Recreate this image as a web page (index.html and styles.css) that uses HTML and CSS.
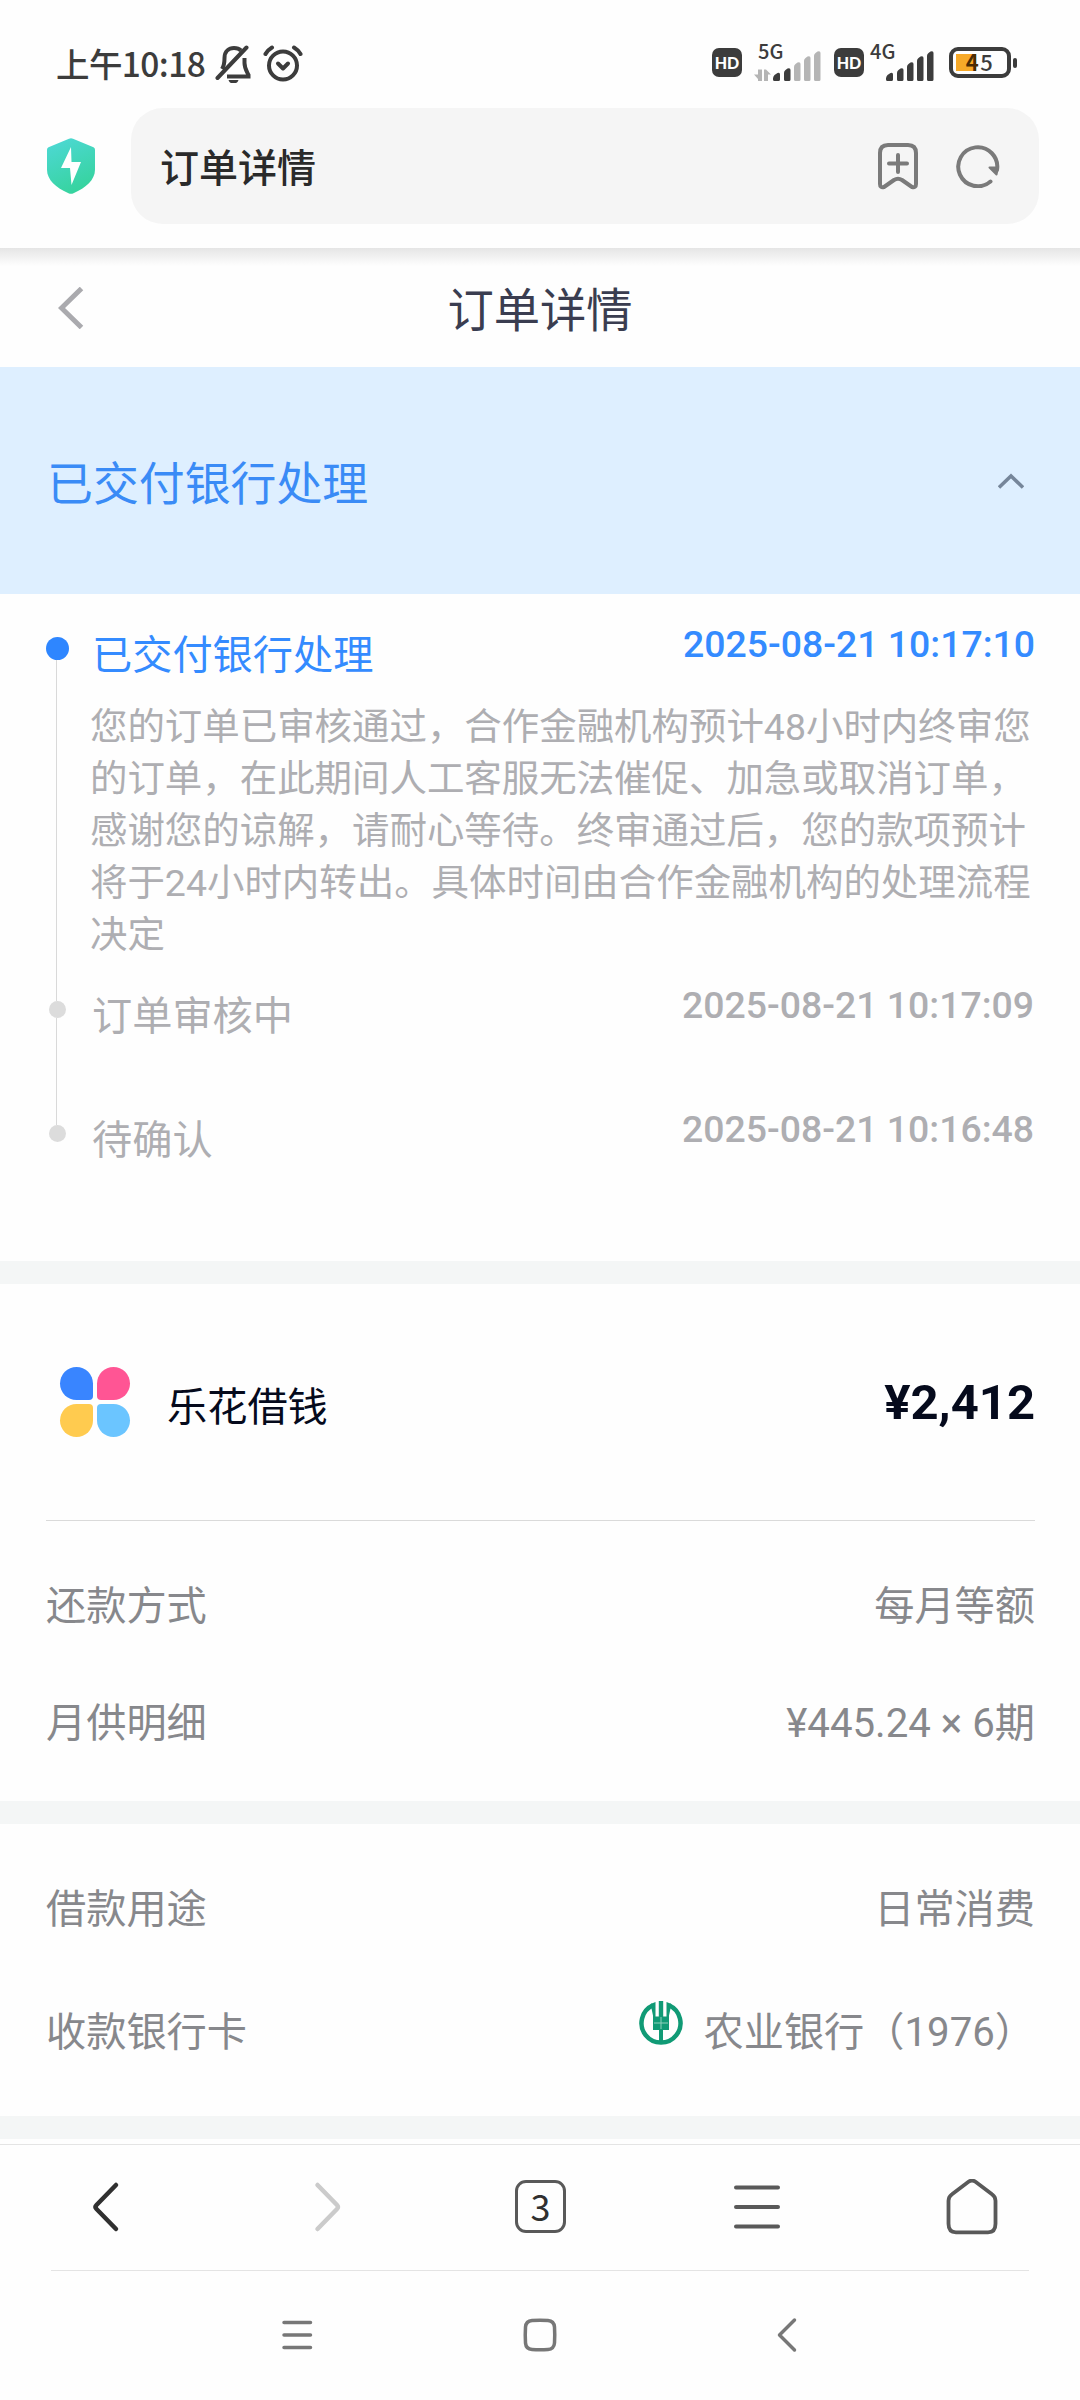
FILE: index.html
```
<!DOCTYPE html>
<html lang="zh-CN">
<head>
  <meta charset="UTF-8">
  <meta name="viewport" content="width=device-width, initial-scale=1.0">
  <title>订单详情</title>
  <link rel="stylesheet" href="styles.css">
</head>
<body>
  <div class="status-bar">
    <span class="clock">上午10:18</span>
    <svg class="icon-bell" width="36" height="40" viewBox="0 0 36 40" fill="none" stroke="#3c3c3c" stroke-width="4">
      <path d="M7 26c2-3 2.500-6 2.500-11C9.500 8 14 5 19 5c3 0 5.500 1 7 2.500"/>
      <path d="M2.500 35L31.500 4.500" stroke-linecap="round"/>
      <path d="M29.500 15v5c0 5 1.500 7 4 12v1.500H12"/>
      <path d="M13.500 37h10c-1 3-3 3.500-5 3.500s-4-.5-5-3.500z" fill="#3c3c3c" stroke="none"/>
    </svg>
    <svg class="icon-alarm" width="40" height="40" viewBox="0 0 40 40" fill="none" stroke="#3c3c3c" stroke-width="4" stroke-linecap="round" stroke-linejoin="round">
      <circle cx="20" cy="22.500" r="14"/>
      <path d="M15 20.500l5 5 5-5"/>
      <path d="M2.500 11c1.500-3 4-5 6.500-6.500M37.500 11C36 8 33.500 6 31 4.500"/>
    </svg>
    <div class="status-right">
      <span class="hd">HD</span>
      <div class="signal signal-5g">
        <span class="net">5G</span>
        <svg width="68" height="40" viewBox="0 0 68 40">
          <path d="M4 27.500h4V39H4v-2L0 32.500h4zM10 27.500h2l5 5h-3V39h-4z" fill="#b5b5b5"/>
          <path d="M19 36.500q0-2 1.500-3.500l3-2q2.500-1 2.500 1.500V37.500q0 1.500-1.500 1.500H20.500Q19 39 19 37.500zM30 31q0-2 1.500-3l2-1.500q3-1 3 1.500v9.500q0 1.500-1.500 1.500h-3.500Q30 39 30 37.500z" fill="#3c3c3c"/>
          <path d="M40 25q0-2 1.500-3l2-1.500q3-1 3 1.500v15.500q0 1.500-1.500 1.500h-3.500Q40 39 40 37.500zM50 19q0-2 1.500-3l2-1.500q3-1 3 1.500v21.500q0 1.500-1.500 1.500h-3.500Q50 39 50 37.500zM60 14q0-2 1.500-3l2-1.500q3-1 3 1.500v26.500q0 1.500-1.500 1.500h-3.500Q60 39 60 37.500z" fill="#b5b5b5"/>
        </svg>
      </div>
      <span class="hd">HD</span>
      <div class="signal signal-4g">
        <span class="net">4G</span>
        <svg width="68" height="40" viewBox="0 0 68 40">
          <path d="M19 36.500q0-2 1.500-3.500l3-2q2.500-1 2.500 1.500V37.500q0 1.500-1.500 1.500H20.500Q19 39 19 37.500zM30 31q0-2 1.500-3l2-1.500q3-1 3 1.500v9.500q0 1.500-1.500 1.500h-3.500Q30 39 30 37.500zM40 25q0-2 1.500-3l2-1.500q3-1 3 1.500v15.500q0 1.500-1.500 1.500h-3.500Q40 39 40 37.500zM50 19q0-2 1.500-3l2-1.500q3-1 3 1.500v21.500q0 1.500-1.500 1.500h-3.500Q50 39 50 37.500zM60 14q0-2 1.500-3l2-1.500q3-1 3 1.500v26.500q0 1.500-1.500 1.500h-3.500Q60 39 60 37.500z" fill="#3c3c3c"/>
        </svg>
      </div>
      <div class="battery"><b>4</b>5</div>
      <div class="battery-tip"></div>
    </div>
  </div>

  <div class="address-bar">
    <svg width="48" height="56" viewBox="0 0 48 56">
      <defs>
        <linearGradient id="shield" x1="0.300" y1="0" x2="0.700" y2="1">
          <stop offset="0" stop-color="#4cd8d2"/>
          <stop offset="1" stop-color="#35d39b"/>
        </linearGradient>
      </defs>
      <path d="M22 .8q2-1 4 0l20.500 8.500q1.500.7 1.500 2.500v20c0 10-9 18-21.500 23.500q-2.500 1-5 0C9 49.800 0 41.800 0 31.800v-20q0-1.800 1.500-2.500z" fill="url(#shield)"/>
      <path d="M24 9L14 30h9l1.500 17L34 24h-9.500z" fill="#fff"/>
    </svg>
    <div class="address">
      <span>订单详情</span>
      <svg class="icon-bookmark" width="42" height="48" viewBox="0 0 42 48" fill="none" stroke="#7a7a7a" stroke-width="4" stroke-linecap="round" stroke-linejoin="round">
        <path d="M3 11q0-8 8-8h20q8 0 8 8v31q0 4-4 3l-10-7q-4-2.500-8 0l-10 7q-4 1-4-3zM21 13v17M12 21.500h18"/>
      </svg>
      <svg width="44" height="44" viewBox="0 0 44 44" fill="none" stroke="#7a7a7a" stroke-width="4" stroke-linecap="round">
        <path d="M34.500 37.500A19.500 19.500 0 1 1 41 26"/>
        <path d="M33.500 23.500h8.500l-1.500 7z" fill="#7a7a7a" stroke-width="2" stroke-linejoin="round"/>
      </svg>
    </div>
  </div>

  <header class="page-header">
    <svg width="26" height="42" viewBox="0 0 26 42" fill="none" stroke="#aaaaae" stroke-width="5">
      <path d="M23.500 1.500L3.500 21l20 19.500"/>
    </svg>
    <h1>订单详情</h1>
  </header>

  <main>
    <div class="banner">
      <h2>已交付银行处理</h2>
      <svg width="26" height="16" viewBox="0 0 26 16" fill="none" stroke="#76869a" stroke-width="3.500">
        <path d="M1 14.500L13 3l12 11.500"/>
      </svg>
    </div>

    <ul class="timeline">
      <li class="step active">
        <div class="rail"><i></i></div>
        <div class="step-body">
          <div class="step-head">
            <span>已交付银行处理</span>
            <time>2025-08-21 10:17:10</time>
          </div>
          <p>您的订单已审核通过，合作金融机构预计48小时内终审您的订单，在此期间人工客服无法催促、加急或取消订单，感谢您的谅解，请耐心等待。终审通过后，您的款项预计将于24小时内转出。具体时间由合作金融机构的处理流程决定</p>
        </div>
      </li>
      <li class="step">
        <div class="rail"><i></i></div>
        <div class="step-body">
          <div class="step-head">
            <span>订单审核中</span>
            <time>2025-08-21 10:17:09</time>
          </div>
        </div>
      </li>
      <li class="step">
        <div class="rail"><i></i></div>
        <div class="step-body">
          <div class="step-head">
            <span>待确认</span>
            <time>2025-08-21 10:16:48</time>
          </div>
        </div>
      </li>
    </ul>

    <section class="card">
      <div class="product">
        <div class="logo"><i></i><i></i><i></i><i></i></div>
        <span class="name">乐花借钱</span>
        <strong>¥2,412</strong>
      </div>
      <div class="row">
        <span>还款方式</span>
        <span>每月等额</span>
      </div>
      <div class="row row-plan">
        <span>月供明细</span>
        <span>¥445.24 × 6期</span>
      </div>
    </section>

    <section class="card card-bank">
      <div class="row">
        <span>借款用途</span>
        <span>日常消费</span>
      </div>
      <div class="row">
        <span>收款银行卡</span>
        <span class="bank">
          <svg width="44" height="44" viewBox="0 0 44 44">
            <path d="M14 4.300A19.500 19.500 0 1 0 30 4.300" fill="none" stroke="#109a75" stroke-width="4.500"/>
            <path d="M11.500 3l5-2v14.500h3.300V0h4.400v15.500h3.300V1l5 2-2.500 11.500V29H24v12h-4V29h-6V14.500z" fill="#109a75"/>
            <path d="M22 16v12M15 22h14" stroke="#8fd0bd" stroke-width="1"/>
          </svg>
          农业银行（1976）
        </span>
      </div>
    </section>
  </main>

  <nav class="browser-nav">
    <svg width="54" height="56" viewBox="0 0 54 56" fill="none" stroke="#303030" stroke-width="4.500" stroke-linecap="round" stroke-linejoin="round">
      <path d="M37 6L17.500 26q-2 2 0 4L37 50"/>
    </svg>
    <svg width="54" height="56" viewBox="0 0 54 56" fill="none" stroke="#cbcbcb" stroke-width="4.500" stroke-linecap="round" stroke-linejoin="round">
      <path d="M20.500 6L40 26q2 2 0 4L20.500 50"/>
    </svg>
    <div class="tabs">3</div>
    <svg width="54" height="56" viewBox="0 0 54 56" stroke="#595959" stroke-width="4" stroke-linecap="round">
      <path d="M6 8.500h42M6 28h42M6 47.500h42"/>
    </svg>
    <svg class="icon-home" width="54" height="56" viewBox="0 0 54 56" fill="none" stroke="#595959" stroke-width="3.800" stroke-linejoin="round">
      <path d="M23.500 2.800q3.500-2.500 7 0l16.500 12.500q3.500 2.500 3.500 6.500v23q0 8.500-7.500 8.500H11q-7.500 0-7.500-8.500v-23q0-4 3.500-6.500z"/>
    </svg>
  </nav>

  <div class="system-nav">
    <svg width="36" height="36" viewBox="0 0 36 36" stroke="#777" stroke-width="3.500" stroke-linecap="round">
      <path d="M5 5.500h26.500M5 18h26.500M5 30.500h26.500"/>
    </svg>
    <svg width="36" height="36" viewBox="0 0 36 36" fill="none" stroke="#777" stroke-width="3.500">
      <path d="M10 3.500Q18 3 26 3.500q6 .5 6.500 6.500.5 8 0 16-.5 6-6.500 6.500-8 .5-16 0Q4 32 3.500 26 3 18 3.500 10 4 4 10 3.500z"/>
    </svg>
    <svg width="36" height="36" viewBox="0 0 36 36" fill="none" stroke="#777" stroke-width="3.500" stroke-linecap="round" stroke-linejoin="round">
      <path d="M25.500 3L10.500 18l15 15"/>
    </svg>
  </div>
</body>
</html>
```

FILE: styles.css
```
* {
  box-sizing: border-box;
}
body {
  margin: 0;
  width: 1080px;
  height: 2400px;
  overflow: hidden;
  background: #fefefe;
  font-family: Roboto, "Noto Sans CJK SC", sans-serif;
  font-size: 40.200px;
  color: #87888c;
  display: flex;
  flex-direction: column;
}
svg {
  display: block;
  flex: none;
}

/* status bar */
.status-bar {
  height: 108px;
  flex: none;
  display: flex;
  align-items: center;
  padding: 17px 63px 0 56px;
  color: #3c3c3c;
}
.clock {
  width: 159px;
  font-family: "Noto Sans CJK SC", sans-serif;
  font-size: 33.500px;
  font-weight: 500;
  letter-spacing: -0.600px;
  line-height: 40px;
  white-space: nowrap;
}
.icon-alarm {
  margin-left: 12px;
}
.status-right {
  display: flex;
  align-items: center;
  margin-left: auto;
}
.hd {
  width: 30px;
  height: 29px;
  border-radius: 7px;
  background: #3c3c3c;
  color: #fff;
  font: 900 16px/29px Lato, sans-serif;
  text-align: center;
}
.signal {
  position: relative;
  height: 40px;
}
.signal svg {
  margin-top: -1px;
}
.signal-5g {
  margin: 0 12px;
}
.signal-4g {
  margin: 0 14px 0 3px;
}
.net {
  position: absolute;
  top: -2px;
  left: 4px;
  font: 500 20px/20px "Noto Sans CJK SC", sans-serif;
}
.signal-4g .net {
  left: 3px;
}
.battery {
  width: 62px;
  height: 31px;
  border: 4.500px solid #3c3c3c;
  border-radius: 9px;
  background: linear-gradient(to right, #f7a928 20px, transparent 20px) 2.500px 2.500px / 44px 17px no-repeat;
  font: 500 22px/21px "Noto Sans CJK SC", sans-serif;
  text-align: center;
  letter-spacing: 1.500px;
}
.battery b {
  color: #4a2c05;
}
.battery-tip {
  width: 4px;
  height: 10px;
  margin-left: 2px;
  border-radius: 2px;
  background: #3c3c3c;
}

/* browser address bar */
.address-bar {
  height: 148px;
  margin-bottom: -8px;
  flex: none;
  display: flex;
  align-items: flex-start;
  padding: 0 41px 0 47px;
}
.address-bar > svg {
  margin: 30px 36px 0 0;
}
.address {
  flex: 1;
  height: 116px;
  border-radius: 32px;
  background: #f5f5f5;
  display: flex;
  align-items: center;
  padding: 0 39px 0 29px;
  font-size: 39px;
  font-weight: 500;
  color: #2a2a2a;
}
.address span {
  margin-top: -3px;
}
.icon-bookmark {
  margin-left: auto;
  margin-right: 37px;
}

/* page header */
.page-header {
  height: 119px;
  flex: none;
  display: flex;
  align-items: center;
  padding: 0 84px 0 58px;
  background: linear-gradient(#e5e5e5, #fefefe 18px);
}
.page-header h1 {
  flex: 1;
  margin: 6px 0 0;
  font-size: 46.300px;
  font-weight: 400;
  line-height: 60px;
  text-align: center;
  color: #3a3d50;
}

main {
  flex: 1;
  border-bottom: 1px solid #e4e4e4;
}
.banner {
  height: 227px;
  display: flex;
  align-items: center;
  justify-content: space-between;
  padding: 0 56px 0 47px;
  background: #deefff;
}
.banner h2 {
  margin: 7px 0 0;
  font-size: 45.900px;
  font-weight: 400;
  line-height: 60px;
  color: #3a8bf6;
}

/* progress timeline */
.timeline {
  list-style: none;
  margin: 0;
  padding: 28px 46px 0 46px;
  color: #aeaeb2;
}
.step {
  display: flex;
  height: 124px;
}
.step.active {
  height: 361px;
}
.step:last-child {
  height: 154px;
}
.rail {
  width: 23px;
  display: flex;
  flex-direction: column;
  align-items: center;
}
.rail::before,
.rail::after {
  content: "";
  width: 1px;
  margin-right: 2px;
  height: 18px;
  background: #d9d9d9;
}
.rail::after {
  flex: 1;
}
.rail i {
  width: 17px;
  height: 17px;
  border-radius: 50%;
  background: #dcdcdc;
}
.active .rail::before {
  height: 15px;
  background: none;
}
.active .rail i {
  width: 23px;
  height: 23px;
  background: #2e86ff;
}
.step:last-child .rail::after {
  background: none;
}
.step-body {
  flex: 1;
}
.step-head {
  display: flex;
  justify-content: space-between;
  padding-left: 23px;
  line-height: 68px;
}
.step-head time {
  font-size: 37.400px;
  font-weight: 500;
  line-height: 45px;
}
.active .step-head {
  color: #348bff;
}
.step p {
  margin: 11px 0 0 21px;
  width: 945px;
  font-size: 37.450px;
  line-height: 52px;
}

/* cards */
.card {
  height: 540px;
  border-top: 23px solid #f4f6f6;
  padding: 0 45px 0 46px;
}
.product {
  height: 237px;
  display: flex;
  align-items: center;
  border-bottom: 1px solid #dadada;
  color: #050a1c;
}
.logo {
  display: grid;
  grid-template-columns: 33px 33px;
  grid-auto-rows: 33px;
  gap: 4px;
  margin-left: 14px;
}
.logo i {
  border-radius: 50%;
}
.logo i:nth-child(1) {
  background: #3985ff;
  border-bottom-right-radius: 4px;
}
.logo i:nth-child(2) {
  background: #ff5594;
  border-bottom-left-radius: 4px;
}
.logo i:nth-child(3) {
  background: #ffcb4f;
  border-top-right-radius: 4px;
}
.logo i:nth-child(4) {
  background: #6bc5ff;
  border-top-left-radius: 4px;
}
.name {
  margin: 2px 0 0 37px;
}
.product strong {
  margin-left: auto;
  font-size: 49px;
  font-weight: 700;
}
.row {
  display: flex;
  justify-content: space-between;
  padding-top: 56px;
  line-height: 60px;
}
.row-plan {
  padding-top: 57px;
}
.card-bank {
  height: 338px;
  border-bottom: 23px solid #f4f6f6;
}
.card-bank .row:last-child {
  padding-top: 63px;
}
.bank {
  display: flex;
}
.bank svg {
  margin: -2px 21px 0 0;
}

/* browser toolbar */
.browser-nav {
  height: 126px;
  flex: none;
  display: flex;
  align-items: center;
  justify-content: space-between;
  margin: 0 51px;
  padding: 0 28px 2px;
  border-bottom: 1px solid #e4e4e4;
}
.tabs {
  width: 51px;
  height: 53px;
  border: 3.500px solid #595959;
  border-radius: 11px;
  font: 400 36px/45px "Noto Sans CJK SC", sans-serif;
  text-align: center;
  color: #303030;
}
.icon-home {
  margin-right: -1px;
  transform: translateX(-3px);
}

/* system navigation */
.system-nav {
  height: 129px;
  flex: none;
  display: flex;
  justify-content: space-between;
  padding: 46px 275px 0 279px;
}
.system-nav svg:nth-child(2) {
  margin-right: 4px;
}
```
